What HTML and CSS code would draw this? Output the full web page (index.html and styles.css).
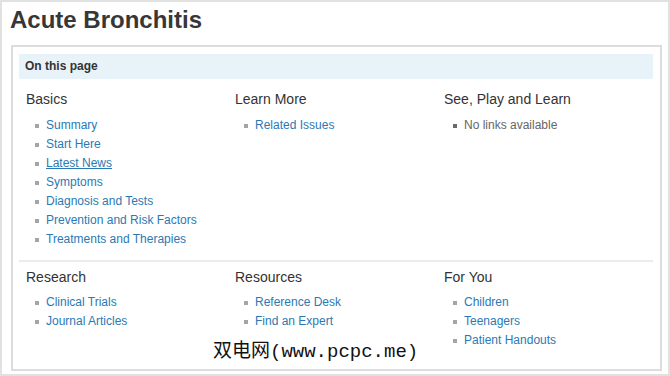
FILE: index.html
```
<!DOCTYPE html>
<html lang="en">
<head>
    <meta charset="UTF-8">
    <meta name="viewport" content="width=device-width, initial-scale=1.0">
    <title>Acute Bronchitis</title>
    <link rel="stylesheet" href="styles.css">
</head>
<body>

<div class="page">
    <h1 class="title">Acute Bronchitis</h1>

    <div class="toc">
        <div class="toc-header">On this page</div>

        <div class="toc-row">
            <div class="toc-col">
                <h2>Basics</h2>
                <ul>
                    <li><a href="#">Summary</a></li>
                    <li><a href="#">Start Here</a></li>
                    <li><a href="#" class="hover">Latest News</a></li>
                    <li><a href="#">Symptoms</a></li>
                    <li><a href="#">Diagnosis and Tests</a></li>
                    <li><a href="#">Prevention and Risk Factors</a></li>
                    <li><a href="#">Treatments and Therapies</a></li>
                </ul>
            </div>
            <div class="toc-col">
                <h2>Learn More</h2>
                <ul>
                    <li><a href="#">Related Issues</a></li>
                </ul>
            </div>
            <div class="toc-col">
                <h2>See, Play and Learn</h2>
                <ul>
                    <li class="empty">No links available</li>
                </ul>
            </div>
        </div>

        <div class="toc-row toc-row-next">
            <div class="toc-col">
                <h2>Research</h2>
                <ul>
                    <li><a href="#">Clinical Trials</a></li>
                    <li><a href="#">Journal Articles</a></li>
                </ul>
            </div>
            <div class="toc-col">
                <h2>Resources</h2>
                <ul>
                    <li><a href="#">Reference Desk</a></li>
                    <li><a href="#">Find an Expert</a></li>
                </ul>
            </div>
            <div class="toc-col">
                <h2>For You</h2>
                <ul>
                    <li><a href="#">Children</a></li>
                    <li><a href="#">Teenagers</a></li>
                    <li><a href="#">Patient Handouts</a></li>
                </ul>
            </div>
        </div>
    </div>

    <div class="watermark">双电网(www.pcpc.me)</div>
</div>

</body>
</html>
```

FILE: styles.css
```
html, body {
    margin: 0;
    padding: 0;
}
body {
    font-family: 'Liberation Sans', Arial, sans-serif;
    color: #333;
    background-color: #fff;
}
.page {
    position: relative;
    width: 670px;
    height: 376px;
    box-sizing: border-box;
    border: 2px solid #e1e1e1;
    padding: 0 0 0 8px;
    overflow: hidden;
}
.title {
    font-size: 24px;
    line-height: 30px;
    font-weight: bold;
    color: #373737;
    margin: 3px 0 0 0;
}
.toc {
    margin: 10px 6px 0 1px;
    border: 2px solid #dcdcdc;
    padding: 7px 7px 19px 6px;
}
.toc-header {
    background-color: #e8f3f9;
    height: 25px;
    line-height: 25px;
    padding-left: 6px;
    font-size: 12px;
    font-weight: bold;
    color: #333;
}
.toc-row {
    display: grid;
    grid-template-columns: repeat(3, 1fr);
    padding: 10px 0 11px 7px;
}
.toc-row-next {
    border-top: 2px solid #ececec;
    padding-top: 5px;
    padding-bottom: 0;
}
.toc-col h2 {
    font-size: 14px;
    font-weight: normal;
    line-height: 20px;
    color: #333;
    margin: 0 0 7px 0;
}
.toc-row-next .toc-col h2 {
    margin-bottom: 6px;
}
.toc-col ul {
    list-style: none;
    margin: 0;
    padding: 0;
}
.toc-col li {
    font-size: 12px;
    line-height: 19px;
    padding-left: 9px;
    white-space: nowrap;
}
.toc-col li::before {
    content: "";
    display: inline-block;
    width: 4px;
    height: 4px;
    background-color: #a5a5a5;
    vertical-align: middle;
    margin-right: 7px;
}
.toc-col a {
    color: #2b79b4;
    text-decoration: none;
}
.toc-col a.hover {
    text-decoration: underline;
}
.toc-col li.empty {
    color: #666;
}
.toc-col li.empty::before {
    background-color: #6a6a6a;
}
.watermark {
    position: absolute;
    left: 211px;
    top: 338px;
    font-family: 'Liberation Mono', 'Noto Sans CJK SC', monospace;
    font-size: 19px;
    line-height: 24px;
    color: #111;
    white-space: nowrap;
}
```
